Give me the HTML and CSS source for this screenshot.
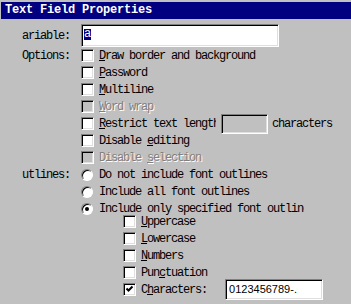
FILE: index.html
```html
<!DOCTYPE html>
<html lang="en">
<head>
  <meta charset="UTF-8">
  <title>Text Field Properties</title>
  <link rel="stylesheet" href="styles.css">
</head>
<body>

  <div class="titlebar">Text Field Properties</div>

  <div class="dialog">
    <div class="row row-var">
      <span class="label">ariable:</span>
      <div class="field field-var"><span class="sel">a</span></div>
    </div>

    <div class="row">
      <span class="label">Options:</span>
      <span class="check"></span><span class="text"><u>D</u>raw border and background</span>
    </div>
    <div class="row opt">
      <span class="check"></span><span class="text"><u>P</u>assword</span>
    </div>
    <div class="row opt">
      <span class="check"></span><span class="text"><u>M</u>ultiline</span>
    </div>
    <div class="row opt">
      <span class="check off"></span><span class="text dim"><u>W</u>ord wrap</span>
    </div>
    <div class="row opt">
      <span class="check"></span><span class="text clip-restrict"><u>R</u>estrict text length</span>
      <div class="field field-len"></div>
      <span class="text after">characters</span>
    </div>
    <div class="row opt">
      <span class="check"></span><span class="text">Disable <u>e</u>diting</span>
    </div>
    <div class="row opt">
      <span class="check off"></span><span class="text dim">Disable <u>s</u>election</span>
    </div>

    <div class="row">
      <span class="label">utlines:</span>
      <span class="radio"></span><span class="text">Do not include font outlines</span>
    </div>
    <div class="row opt">
      <span class="radio"></span><span class="text">Include all font outlines</span>
    </div>
    <div class="row opt">
      <span class="radio on"></span><span class="text clip-only">Include only specified font outlines</span>
    </div>

    <div class="sub">
      <div class="row">
        <span class="check"></span><span class="text"><u>U</u>ppercase</span>
      </div>
      <div class="row">
        <span class="check"></span><span class="text"><u>L</u>owercase</span>
      </div>
      <div class="row">
        <span class="check"></span><span class="text"><u>N</u>umbers</span>
      </div>
      <div class="row">
        <span class="check"></span><span class="text">Pun<u>c</u>tuation</span>
      </div>
      <div class="row">
        <span class="check"><svg viewBox="0 0 9 9" width="9" height="9"><path d="M1.5 3.5 L3.5 5.5 L7.5 1.5" stroke="#000" stroke-width="2" fill="none"/></svg></span><span class="text">C<u>h</u>aracters:</span>
        <div class="field field-chars">0123456789-.</div>
      </div>
    </div>
  </div>

</body>
</html>
```

FILE: styles.css
```css
body {
  margin: 0;
  width: 351px;
  height: 304px;
  overflow: hidden;
  background: #c0c0c0;
  color: #000;
  font-family: "Liberation Mono", monospace;
  font-size: 12px;
  letter-spacing: -1.2px;
}
.titlebar {
  margin: 2px 0 0 1px;
  height: 17px;
  padding-left: 4px;
  background: #000080;
  color: #fff;
  font-weight: bold;
  font-size: 12px;
  letter-spacing: -0.2px;
  line-height: 17px;
}
.row {
  display: flex;
  align-items: center;
  height: 17px;
  white-space: nowrap;
}
.row-var {
  height: 23px;
  margin-top: 5px;
}
.label {
  width: 70px;
  margin-right: 11px;
  text-align: right;
  flex: none;
}
.opt {
  padding-left: 81px;
}
.sub {
  margin-top: -4px;
  padding-left: 123px;
}
.field {
  box-sizing: border-box;
  border: 1px solid;
  border-color: #808080 #fff #fff #808080;
  box-shadow: inset 1px 1px #000, inset -1px -1px #dfdfdf;
  flex: none;
}
.field-var {
  width: 198px;
  height: 23px;
  padding: 2px 0 0 2px;
  background: #fff;
}
.sel {
  display: inline-block;
  width: 7px;
  height: 11px;
  line-height: 11px;
  background: #000080;
  color: #fff;
  text-align: center;
  letter-spacing: 0;
}
.field-len {
  width: 47px;
  height: 20px;
  margin-left: 5px;
}
.field-chars {
  width: 98px;
  height: 21px;
  margin-left: 18px;
  padding: 3px 0 0 3px;
  background: #fff;
  font-family: "Liberation Sans", sans-serif;
  font-size: 11px;
  letter-spacing: 0;
}
.check {
  display: flex;
  align-items: center;
  justify-content: center;
  box-sizing: border-box;
  width: 13px;
  height: 13px;
  margin-right: 5px;
  background: #fff;
  border: 1px solid;
  border-color: #808080 #fff #fff #808080;
  box-shadow: inset 1px 1px #000, inset -1px -1px #dfdfdf;
  flex: none;
}
.check.off {
  background: #c0c0c0;
}
.radio {
  display: flex;
  align-items: center;
  justify-content: center;
  box-sizing: border-box;
  width: 12px;
  height: 12px;
  margin-right: 6px;
  border-radius: 50%;
  background: #fff;
  border: 1px solid;
  border-color: #808080 #fff #fff #808080;
  box-shadow: inset 1px 1px #000;
  flex: none;
}
.radio.on::after {
  content: "";
  width: 4px;
  height: 4px;
  border-radius: 50%;
  background: #000;
}
.text u {
  text-underline-offset: 1px;
}
.dim {
  color: #808080;
  text-shadow: 1px 1px #fff;
}
.clip-restrict {
  width: 117px;
  overflow: hidden;
  flex: none;
}
.clip-only {
  width: 205px;
  overflow: hidden;
}
.after {
  margin-left: 4px;
}
```
